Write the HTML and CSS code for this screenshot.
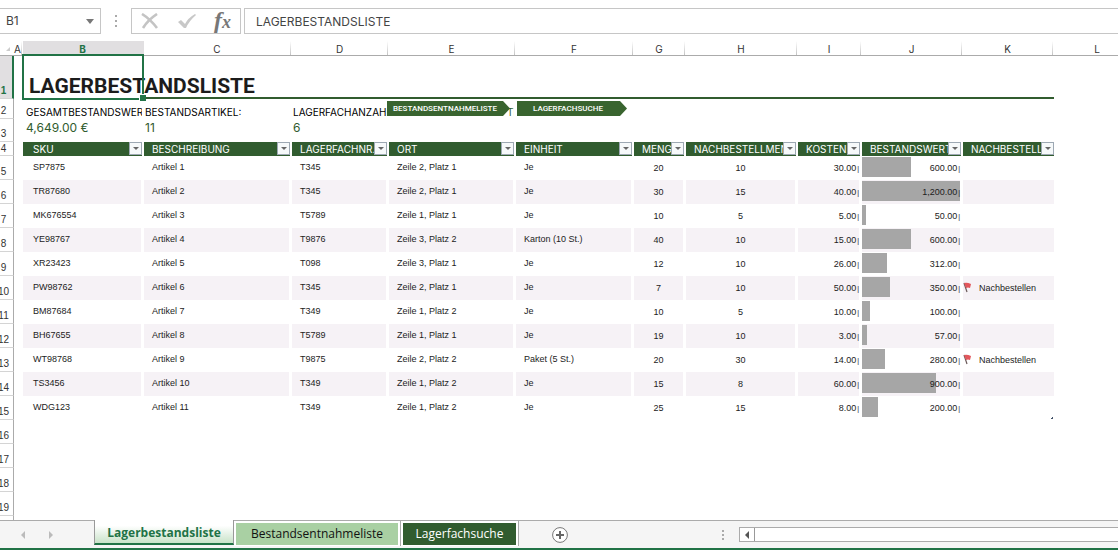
FILE: index.html
```html
<!DOCTYPE html>
<html lang="de">
<head>
<meta charset="utf-8">
<title>Lagerbestandsliste</title>
<link rel="stylesheet" href="styles.css">
</head>
<body>
<div class="formula-bar">
  <button class="name-box" type="button" aria-label="Namenfeld">B1<svg viewBox="0 0 8 5" width="8" height="5"><path d="M0 0h8L4 5z" fill="#777"/></svg></button>
  <svg class="dots" viewBox="0 0 2 12" width="2" height="12"><path d="M0 0h2v2H0zM0 5h2v2H0zM0 10h2v2H0z" fill="#aaa"/></svg>
  <div class="tools">
    <button type="button" aria-label="Abbrechen"><svg viewBox="0 0 18 16" width="18" height="16"><path d="M1 1q8 5 15 14M16 1Q7 7 2 15" fill="none" stroke="#c4c4c4" stroke-width="2.6"/></svg></button>
    <button type="button" aria-label="Eingeben"><svg viewBox="0 0 20 16" width="20" height="16"><path d="M1 9l3-2 4 4Q11 5 18 1l1 1Q12 8 9 15H7z" fill="#c8c8c8"/></svg></button>
    <button class="fx" type="button" aria-label="Funktion einfügen"><i>f</i><i class="fx-x">x</i></button>
  </div>
  <input class="formula" type="text" value="LAGERBESTANDSLISTE" aria-label="Bearbeitungsleiste">
</div>

<main class="sheet">
<table class="grid">
  <colgroup><col class="c-row"><col class="c-a"><col class="c-b"><col class="c-c"><col class="c-d"><col class="c-e"><col class="c-f"><col class="c-g"><col class="c-h"><col class="c-i"><col class="c-j"><col class="c-k"><col class="c-l"><col></colgroup>
  <thead>
    <tr class="letters"><th class="corner"><svg viewBox="0 0 4 4" width="4" height="4"><path d="M4 0v4H0z" fill="#ccc"/></svg></th><th>A</th><th class="on">B</th><th>C</th><th>D</th><th>E</th><th>F</th><th>G</th><th>H</th><th>I</th><th>J</th><th>K</th><th>L</th><th></th></tr>
  </thead>
  <tbody>
    <tr class="title-row"><th class="num on"><span>1</span></th><td></td><td class="selected"><h1>LAGERBESTANDSLISTE</h1></td><td class="rule" colspan="9"></td><td></td><td></td></tr>
    <tr class="labels"><th class="num"><span>2</span></th><td></td><td class="first"><div class="clip">GESAMTBESTANDSWERT:</div></td><td><div class="clip">BESTANDSARTIKEL:</div></td><td><div class="clip">LAGERFACHANZAHL:</div></td><td class="anchor"><div class="clip rest">TE</div><a class="arrow arrow-out" href="#entnahme">BESTANDSENTNAHMELISTE</a></td><td class="anchor"><a class="arrow arrow-find" href="#suche">LAGERFACHSUCHE</a></td><td colspan="7"></td></tr>
    <tr class="totals"><th class="num"><span>3</span></th><td></td><td class="first">4,649.00 €</td><td>11</td><td>6</td><td colspan="9"></td></tr>
    <tr class="heads"><th class="num"><span>4</span></th><td></td>
      <th class="head first"><div><span>SKU</span><button type="button" aria-label="SKU filtern"></button></div></th>
      <th class="head"><div><span>BESCHREIBUNG</span><button type="button" aria-label="Beschreibung filtern"></button></div></th>
      <th class="head"><div><span>LAGERFACHNR.</span><button type="button" aria-label="Lagerfachnr. filtern"></button></div></th>
      <th class="head"><div><span>ORT</span><button type="button" aria-label="Ort filtern"></button></div></th>
      <th class="head"><div><span>EINHEIT</span><button type="button" aria-label="Einheit filtern"></button></div></th>
      <th class="head"><div><span>MENGE</span><button type="button" aria-label="Menge filtern"></button></div></th>
      <th class="head"><div><span>NACHBESTELLMENGE</span><button type="button" aria-label="Nachbestellmenge filtern"></button></div></th>
      <th class="head"><div><span>KOSTEN</span><button type="button" aria-label="Kosten filtern"></button></div></th>
      <th class="head"><div><span>BESTANDSWERT</span><button type="button" aria-label="Bestandswert filtern"></button></div></th>
      <th class="head last"><div><span>NACHBESTELLEN</span><button type="button" aria-label="Nachbestellen filtern"></button></div></th>
      <td></td><td></td></tr>
    <tr class="data"><th class="num"><span>5</span></th><td></td><td class="first">SP7875</td><td>Artikel 1</td><td>T345</td><td>Zeile 2, Platz 1</td><td>Je</td><td class="mid">20</td><td class="mid">10</td><td class="money">30.00<small>|</small></td><td class="money"><div class="meter"><i style="width:50%"></i><span>600.00<small>|</small></span></div></td><td class="flagged"></td><td></td><td></td></tr>
    <tr class="data band"><th class="num"><span>6</span></th><td></td><td class="first">TR87680</td><td>Artikel 2</td><td>T345</td><td>Zeile 2, Platz 1</td><td>Je</td><td class="mid">30</td><td class="mid">15</td><td class="money">40.00<small>|</small></td><td class="money"><div class="meter"><i style="width:100%"></i><span>1,200.00<small>|</small></span></div></td><td class="flagged"></td><td></td><td></td></tr>
    <tr class="data"><th class="num"><span>7</span></th><td></td><td class="first">MK676554</td><td>Artikel 3</td><td>T5789</td><td>Zeile 1, Platz 1</td><td>Je</td><td class="mid">10</td><td class="mid">5</td><td class="money">5.00<small>|</small></td><td class="money"><div class="meter"><i style="width:4%"></i><span>50.00<small>|</small></span></div></td><td class="flagged"></td><td></td><td></td></tr>
    <tr class="data band"><th class="num"><span>8</span></th><td></td><td class="first">YE98767</td><td>Artikel 4</td><td>T9876</td><td>Zeile 3, Platz 2</td><td>Karton (10 St.)</td><td class="mid">40</td><td class="mid">10</td><td class="money">15.00<small>|</small></td><td class="money"><div class="meter"><i style="width:50%"></i><span>600.00<small>|</small></span></div></td><td class="flagged"></td><td></td><td></td></tr>
    <tr class="data"><th class="num"><span>9</span></th><td></td><td class="first">XR23423</td><td>Artikel 5</td><td>T098</td><td>Zeile 3, Platz 1</td><td>Je</td><td class="mid">12</td><td class="mid">10</td><td class="money">26.00<small>|</small></td><td class="money"><div class="meter"><i style="width:26%"></i><span>312.00<small>|</small></span></div></td><td class="flagged"></td><td></td><td></td></tr>
    <tr class="data band"><th class="num"><span>10</span></th><td></td><td class="first">PW98762</td><td>Artikel 6</td><td>T345</td><td>Zeile 2, Platz 1</td><td>Je</td><td class="mid">7</td><td class="mid">10</td><td class="money">50.00<small>|</small></td><td class="money"><div class="meter"><i style="width:29%"></i><span>350.00<small>|</small></span></div></td><td class="flagged"><div><svg viewBox="0 0 9 11" width="9" height="11"><path d="M1 1l3 9" stroke="#6b5a5a" stroke-width="1.2"/><path d="M1 1q3-1 7 1L7 6Q5 5 3 6z" fill="#e2575c"/></svg>Nachbestellen</div></td><td></td><td></td></tr>
    <tr class="data"><th class="num"><span>11</span></th><td></td><td class="first">BM87684</td><td>Artikel 7</td><td>T349</td><td>Zeile 1, Platz 2</td><td>Je</td><td class="mid">10</td><td class="mid">5</td><td class="money">10.00<small>|</small></td><td class="money"><div class="meter"><i style="width:8%"></i><span>100.00<small>|</small></span></div></td><td class="flagged"></td><td></td><td></td></tr>
    <tr class="data band"><th class="num"><span>12</span></th><td></td><td class="first">BH67655</td><td>Artikel 8</td><td>T5789</td><td>Zeile 1, Platz 1</td><td>Je</td><td class="mid">19</td><td class="mid">10</td><td class="money">3.00<small>|</small></td><td class="money"><div class="meter"><i style="width:5%"></i><span>57.00<small>|</small></span></div></td><td class="flagged"></td><td></td><td></td></tr>
    <tr class="data"><th class="num"><span>13</span></th><td></td><td class="first">WT98768</td><td>Artikel 9</td><td>T9875</td><td>Zeile 2, Platz 2</td><td>Paket (5 St.)</td><td class="mid">20</td><td class="mid">30</td><td class="money">14.00<small>|</small></td><td class="money"><div class="meter"><i style="width:23%"></i><span>280.00<small>|</small></span></div></td><td class="flagged"><div><svg viewBox="0 0 9 11" width="9" height="11"><path d="M1 1l3 9" stroke="#6b5a5a" stroke-width="1.2"/><path d="M1 1q3-1 7 1L7 6Q5 5 3 6z" fill="#e2575c"/></svg>Nachbestellen</div></td><td></td><td></td></tr>
    <tr class="data band"><th class="num"><span>14</span></th><td></td><td class="first">TS3456</td><td>Artikel 10</td><td>T349</td><td>Zeile 1, Platz 2</td><td>Je</td><td class="mid">15</td><td class="mid">8</td><td class="money">60.00<small>|</small></td><td class="money"><div class="meter"><i style="width:75%"></i><span>900.00<small>|</small></span></div></td><td class="flagged"></td><td></td><td></td></tr>
    <tr class="data"><th class="num"><span>15</span></th><td></td><td class="first">WDG123</td><td>Artikel 11</td><td>T349</td><td>Zeile 1, Platz 2</td><td>Je</td><td class="mid">25</td><td class="mid">15</td><td class="money">8.00<small>|</small></td><td class="money"><div class="meter"><i style="width:16%"></i><span>200.00<small>|</small></span></div></td><td class="flagged table-end"></td><td></td><td></td></tr>
    <tr class="empty"><th class="num"><span>16</span></th><td colspan="13"></td></tr>
    <tr class="empty"><th class="num"><span>17</span></th><td colspan="13"></td></tr>
    <tr class="empty"><th class="num"><span>18</span></th><td colspan="13"></td></tr>
    <tr class="empty"><th class="num"><span>19</span></th><td colspan="13"></td></tr>
    <tr class="empty"><th class="num"></th><td colspan="13"></td></tr>
  </tbody>
</table>
</main>

<footer class="tab-bar">
  <div class="nav">
    <button type="button" aria-label="Vorheriges Blatt"><svg viewBox="0 0 4 8" width="4" height="8"><path d="M4 0v8L0 4z" fill="#bbb"/></svg></button>
    <button type="button" aria-label="Nächstes Blatt"><svg viewBox="0 0 4 8" width="4" height="8"><path d="M0 0v8l4-4z" fill="#bbb"/></svg></button>
  </div>
  <nav class="tabs">
    <a class="tab active" href="#bestand">Lagerbestandsliste</a>
    <a class="tab light" href="#entnahme"><span>Bestandsentnahmeliste</span></a>
    <a class="tab dark" href="#suche"><span>Lagerfachsuche</span></a>
  </nav>
  <button class="add" type="button" aria-label="Neues Blatt"><svg viewBox="0 0 16 16" width="16" height="16"><circle cx="8" cy="8" r="7.4" fill="#fff" stroke="#777"/><path d="M8 4v8M4 8h8" stroke="#666" stroke-width="2"/></svg></button>
  <div class="scroll-area">
    <svg viewBox="0 0 2 10" width="2" height="10"><path d="M0 0h2v2H0zM0 4h2v2H0zM0 8h2v2H0z" fill="#aaa"/></svg>
    <div class="scroll"><button type="button" aria-label="Nach links"><svg viewBox="0 0 4 8" width="4" height="8"><path d="M4 0v8L0 4z" fill="#555"/></svg></button></div>
  </div>
</footer>
</body>
</html>
```

FILE: styles.css
```css
* { box-sizing: border-box; }

body {
  margin: 0;
  height: 100vh;
  display: flex;
  flex-direction: column;
  overflow: hidden;
  background: #fff;
  color: #1c1c1c;
  font: 10px/12px Inter, "Liberation Sans", sans-serif;
}

button {
  margin: 0;
  padding: 0;
  border: 0;
  background: none;
  color: inherit;
  font: inherit;
}

a { color: inherit; text-decoration: none; }
svg { display: block; flex: none; }

/* Formula bar */
.formula-bar { display: flex; padding: 8px 0 7px; height: 41px; flex: none; }
.name-box {
  width: 101px;
  padding: 0 6px;
  display: flex;
  align-items: center;
  justify-content: space-between;
  border: 1px solid #c6c6c6;
  border-left: 0;
  font-size: 12px;
  color: #444;
}
.dots { margin: 7px 14px 0; }
.tools {
  width: 110px;
  display: flex;
  align-items: center;
  justify-content: space-between;
  padding: 0 9px;
  border: 1px solid #c6c6c6;
}
.fx { font: bold 24px/22px "Liberation Serif", serif; color: #777; }
.fx-x { font-size: 18px; }
.formula {
  flex: 1;
  min-width: 0;
  margin-left: 3px;
  padding: 0 11px;
  border: 1px solid #c6c6c6;
  border-right: 0;
  border-radius: 0;
  background: #fff;
  color: #444;
  font: 12px/16px Inter, "Liberation Sans", sans-serif;
}
.formula-bar .name-box, .tools, .formula { height: 26px; }

/* Grid */
.sheet { flex: 1; min-height: 0; overflow: hidden; }
.grid {
  table-layout: fixed;
  width: 100%;
  min-width: 1142px;
  border-collapse: separate;
  border-spacing: 0;
}
.grid th, .grid td { padding: 0; text-align: left; font-weight: normal; white-space: nowrap; }
.c-row { width: 14px; }
.c-a { width: 9px; }
.c-b { width: 121px; }
.c-c { width: 148px; }
.c-d { width: 97px; }
.c-e { width: 127px; }
.c-f { width: 118px; }
.c-g { width: 52px; }
.c-h { width: 112px; }
.c-i { width: 64px; }
.c-j { width: 101px; }
.c-k { width: 91px; }
.c-l { width: 88px; }

.grid .letters th {
  height: 15px;
  border-bottom: 1px solid #ababab;
  padding: 2px 2px 0 0;
  background: linear-gradient(#fff, #c4c4c4) right 1px top / 1px 100% no-repeat;
  text-align: center;
  font-size: 10px;
  line-height: 12px;
  color: #333;
}
.grid .letters .on { background: #e1dfe1; color: #217346; font-weight: bold; }
.grid .letters .corner { background: none; }
.corner svg { margin-left: 6px; }

.grid .num {
  height: 24px;
  border-right: 1px solid #ababab;
  border-bottom: 1px solid #d4d4d4;
  vertical-align: bottom;
  font: 10px/14px "Liberation Sans", sans-serif;
  color: #333;
}
.num span { display: flex; justify-content: center; width: 7px; }
.grid .num.on { background: #e1dfe1; border-right: 2px solid #217346; color: #217346; font-weight: bold; }

.title-row td { height: 43px; }
.selected { position: relative; vertical-align: bottom; }
.selected::before {
  content: "";
  position: absolute;
  inset: -2px 0 -1px -1px;
  border: 2px solid #217346;
}
.selected::after {
  content: "";
  position: absolute;
  right: -2px;
  bottom: -2px;
  width: 6px;
  height: 6px;
  border: solid #fff;
  border-width: 1px 0 0 1px;
  background: #217346;
}
h1 { width: 0; margin: 0; padding: 0 0 1px 6px; font: bold 21px/24px Roboto, "Liberation Sans", sans-serif; }
.rule { border-bottom: 2px solid #315c2f; }

.grid .labels .num { height: 20px; }
.grid .labels td { padding-left: 1px; vertical-align: top; color: #000; }
.grid .labels .first, .grid .totals .first { padding-left: 3px; }
.clip { overflow: hidden; margin: 6px 2px 0 0; line-height: 14px; }
.grid .labels .anchor { position: relative; padding: 0; }
.rest { padding-left: 118px; color: #315c2f; }
.arrow {
  position: absolute;
  top: 2px;
  height: 15px;
  background: #39642f;
  clip-path: polygon(0 0, calc(100% - 7px) 0, 100% 50%, calc(100% - 7px) 100%, 0 100%);
  color: #fff;
  font: 500 8px/16px Roboto, "Liberation Sans", sans-serif;
}
.arrow-out { left: -2px; width: 123px; padding-left: 6px; }
.arrow-find { left: 1px; width: 110px; padding-left: 16px; }

.grid .totals .num { height: 23px; }
.grid .totals td { padding: 2px 0 0 1px; vertical-align: top; font-size: 12px; line-height: 14px; color: #315c2f; }

.grid .heads .num { height: 14px; line-height: 13px; }
.grid .head { border-right: 2px solid transparent; background: #315c2f; background-clip: padding-box; color: #fff; }
.grid .last { border-right: 0; }
.head div { display: flex; height: 14px; padding-left: 8px; line-height: 14px; }
.head.first div { padding-left: 10px; }
.head span { flex: 1; min-width: 0; overflow: hidden; }
.head button {
  flex: none;
  display: grid;
  place-items: center;
  width: 13px;
  height: 13px;
  border: 1px solid #9da8b3;
  background: #f6f9fa;
}
.head button::before { content: ""; border: 3px solid transparent; border-top-color: #666; border-bottom: 0; }

.grid .data td {
  padding: 0 0 2px 8px;
  border-right: 3px solid transparent;
  background-clip: padding-box;
  font: 9px/12px "Liberation Sans", sans-serif;
}
.grid .data .first { padding-left: 10px; }
.band td:nth-child(n+3):nth-child(-n+12) { background-color: #f6f2f6; }
.grid .data .mid { padding: 0; text-align: center; }
.grid .data .money { padding: 0; text-align: right; }
.money small { margin-left: 1px; font-size: 7px; }
.grid .data .meter { position: relative; height: 20px; margin-bottom: 2px; line-height: 22px; }
.meter i { position: absolute; top: 0; left: 0; height: 100%; background: #a6a6a6; }
.meter span { position: relative; }
.grid .data .flagged { padding: 0; border-right: 0; }
.flagged div { display: flex; gap: 7px; }
.table-end { background: linear-gradient(135deg, transparent 50%, #44546a 50%) right 1px bottom 1px / 3px 3px no-repeat; }

/* Sheet tabs */
.tab-bar {
  flex: none;
  display: flex;
  height: 30px;
  border-top: 1px solid #ababab;
  border-bottom: 2px solid #217346;
  background: #f5f5f5;
  font: 12px/16px "Open Sans", "Noto Sans", sans-serif;
}
.nav { width: 94px; display: flex; gap: 24px; padding-left: 21px; align-items: center; }
.tabs { display: flex; }
.tab { display: block; text-align: center; }
.active {
  margin-top: -1px;
  width: 140px;
  height: 25px;
  padding-top: 5px;
  border: solid #999;
  border-width: 0 1px;
  border-bottom: 2px solid #217346;
  background: linear-gradient(#fff 25%, #c9e3c9);
  color: #217346;
  font-weight: bold;
}
.light, .dark { padding: 2px; background: #fff; border-right: 1px solid #ababab; height: 25px; }
.tab span { display: block; height: 22px; line-height: 21px; }
.light { width: 167px; color: #111; }
.light span { background: #a9d0a3; }
.dark { width: 118px; color: #fff; }
.dark span { background: #315c2f; }
.add { align-self: center; margin-left: 33px; }
.scroll-area { flex: 1; display: flex; align-items: center; gap: 15px; margin-left: 154px; }
.scroll { flex: 1; height: 15px; border: 1px solid #ababab; border-right: 0; background: #fff; }
.scroll button { display: grid; place-items: center; width: 15px; height: 13px; border-right: 1px solid #999; }
```
